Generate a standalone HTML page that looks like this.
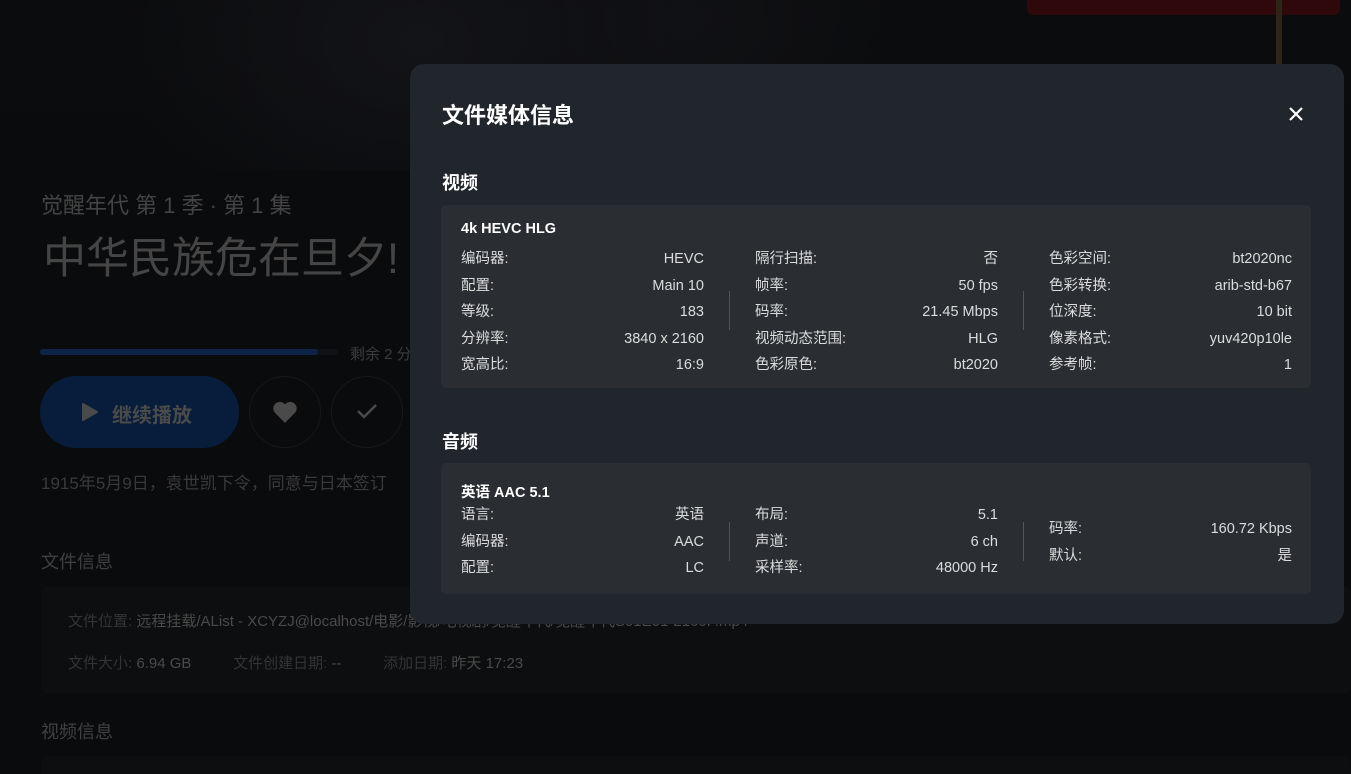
<!DOCTYPE html>
<html><head><meta charset="utf-8"><style>
*{margin:0;padding:0;box-sizing:border-box}
html,body{width:1351px;height:774px;overflow:hidden}
body{background:#0a0b0d;font-family:"Liberation Sans","Noto Sans CJK SC",sans-serif;position:relative;color:#555}
.a{position:absolute}
.bgimg{left:0;top:0;width:1351px;height:170px;background:radial-gradient(ellipse 300px 200px at 420px 40px,#131418,transparent),radial-gradient(ellipse 200px 150px at 700px 20px,#101114,transparent),linear-gradient(#0b0c0e,#0a0b0d)}
.modal{left:410px;top:64px;width:934px;height:560px;background:#21252c;border-radius:14px;color:#e8e8e8}
.card{position:absolute;left:31px;width:870px;background:#2a2e33;border-radius:5px}
.col{position:absolute;width:243px;font-size:14.5px}
.col div{height:26.6px;line-height:26.6px;display:flex;justify-content:space-between;color:#dcdcdc}
.div{position:absolute;width:1px;background:#50555b}
.ct{position:absolute;left:20px;font-weight:bold;font-size:14.5px;color:#fff}
</style></head><body>
<div class="a bgimg"></div>
<div class="a" style="left:1027px;top:0;width:313px;height:15px;background:#2e080a;border-radius:0 0 6px 6px"></div>
<div class="a" style="left:1276px;top:0;width:6px;height:64px;background:#2e2418"></div>

<div class="a" style="left:41px;top:188px;font-size:22px;color:#444">觉醒年代 第 1 季 · 第 1 集</div>
<div class="a" style="left:43px;top:224px;font-size:43px;color:#454545">中华民族危在旦夕!</div>
<div class="a" style="left:40px;top:349px;width:298px;height:6px;background:#111215;border-radius:3px"></div>
<div class="a" style="left:40px;top:349px;width:278px;height:6px;background:#0d2446;border-radius:3px"></div>
<div class="a" style="left:350px;top:343px;font-size:15px;color:#3c3c3c">剩余 2 分</div>
<div class="a" style="left:40px;top:376px;width:199px;height:72px;border-radius:36px;background:#081d3c"></div>
<svg class="a" style="left:82px;top:403px" width="16" height="18"><path d="M1 1L15 9L1 17Z" fill="#4a4a4a" stroke="#4a4a4a" stroke-linejoin="round" stroke-width="2"/></svg>
<div class="a" style="left:112px;top:399px;font-size:20px;color:#4a4a4a;font-weight:bold">继续播放</div>
<div class="a" style="left:249px;top:376px;width:72px;height:72px;border-radius:50%;border:1px solid #17181b"></div>
<svg class="a" style="left:272px;top:400px" width="26" height="24" viewBox="0 0 24 22"><path d="M12 21L2.5 11.5A5.5 5.5 0 0 1 12 4A5.5 5.5 0 0 1 21.5 11.5Z" fill="#4a4a4a"/></svg>
<div class="a" style="left:331px;top:376px;width:72px;height:72px;border-radius:50%;border:1px solid #17181b"></div>
<svg class="a" style="left:356px;top:402px" width="22" height="18"><path d="M2 9L8 15L20 3" stroke="#4a4a4a" stroke-width="2.5" fill="none"/></svg>
<div class="a" style="left:41px;top:469px;font-size:17px;color:#3a3a3a;white-space:nowrap">1915年5月9日，袁世凯下令，同意与日本签订</div>
<div class="a" style="left:41px;top:548px;font-size:18px;color:#404040">文件信息</div>
<div class="a" style="left:41px;top:586px;width:1310px;height:108px;background:#0d0e10;border-radius:8px"></div>
<div class="a" style="left:68px;top:610px;font-size:15px;color:#343434;white-space:nowrap">文件位置: <span style="color:#4a4a4a">远程挂载/AList - XCYZJ@localhost/电影/影视/电视剧/觉醒年代/觉醒年代S01E01-2160P.mp4</span></div>
<div class="a" style="left:68px;top:652px;font-size:15px;color:#343434;white-space:nowrap">文件大小: <span style="color:#4a4a4a">6.94 GB</span>&nbsp;&nbsp;&nbsp;&nbsp;&nbsp;&nbsp;&nbsp;&nbsp;&nbsp;&nbsp;文件创建日期: <span style="color:#4a4a4a">--</span>&nbsp;&nbsp;&nbsp;&nbsp;&nbsp;&nbsp;&nbsp;&nbsp;&nbsp;&nbsp;添加日期: <span style="color:#4a4a4a">昨天 17:23</span></div>
<div class="a" style="left:41px;top:718px;font-size:18px;color:#404040">视频信息</div>
<div class="a" style="left:41px;top:756px;width:1310px;height:30px;background:#0d0e10;border-radius:8px"></div>

<div class="a modal">
 <div class="a" style="left:32px;top:34px;font-size:22px;color:#fff;font-weight:bold">文件媒体信息</div>
 <svg class="a" style="left:878px;top:42px" width="16" height="16"><path d="M2 2L14 14M14 2L2 14" stroke="#fff" stroke-width="2.2"/></svg>
 <div class="a" style="left:32px;top:105px;font-size:18px;font-weight:bold;color:#fff">视频</div>
 <div class="card" style="top:141px;height:183px">
  <div class="ct" style="top:16px">4k HEVC HLG</div>
  <div class="col" style="left:20px;top:41px">
   <div><span>编码器:</span><span>HEVC</span></div><div><span>配置:</span><span>Main 10</span></div><div><span>等级:</span><span>183</span></div><div><span>分辨率:</span><span>3840 x 2160</span></div><div><span>宽高比:</span><span>16:9</span></div></div>
  <div class="div" style="left:288px;top:86px;height:39px"></div>
  <div class="col" style="left:314px;top:41px">
   <div><span>隔行扫描:</span><span>否</span></div><div><span>帧率:</span><span>50 fps</span></div><div><span>码率:</span><span>21.45 Mbps</span></div><div><span>视频动态范围:</span><span>HLG</span></div><div><span>色彩原色:</span><span>bt2020</span></div></div>
  <div class="div" style="left:582px;top:86px;height:39px"></div>
  <div class="col" style="left:608px;top:41px">
   <div><span>色彩空间:</span><span>bt2020nc</span></div><div><span>色彩转换:</span><span>arib-std-b67</span></div><div><span>位深度:</span><span>10 bit</span></div><div><span>像素格式:</span><span>yuv420p10le</span></div><div><span>参考帧:</span><span>1</span></div></div>
 </div>
 <div class="a" style="left:32px;top:364px;font-size:18px;font-weight:bold;color:#fff">音频</div>
 <div class="card" style="top:399px;height:131px">
  <div class="ct" style="top:18px">英语 AAC 5.1</div>
  <div class="col" style="left:20px;top:39px">
   <div><span>语言:</span><span>英语</span></div><div><span>编码器:</span><span>AAC</span></div><div><span>配置:</span><span>LC</span></div></div>
  <div class="div" style="left:288px;top:59px;height:39px"></div>
  <div class="col" style="left:314px;top:39px">
   <div><span>布局:</span><span>5.1</span></div><div><span>声道:</span><span>6 ch</span></div><div><span>采样率:</span><span>48000 Hz</span></div></div>
  <div class="div" style="left:582px;top:59px;height:39px"></div>
  <div class="col" style="left:608px;top:53px">
   <div><span>码率:</span><span>160.72 Kbps</span></div><div><span>默认:</span><span>是</span></div></div>
 </div>
</div>
</body></html>
